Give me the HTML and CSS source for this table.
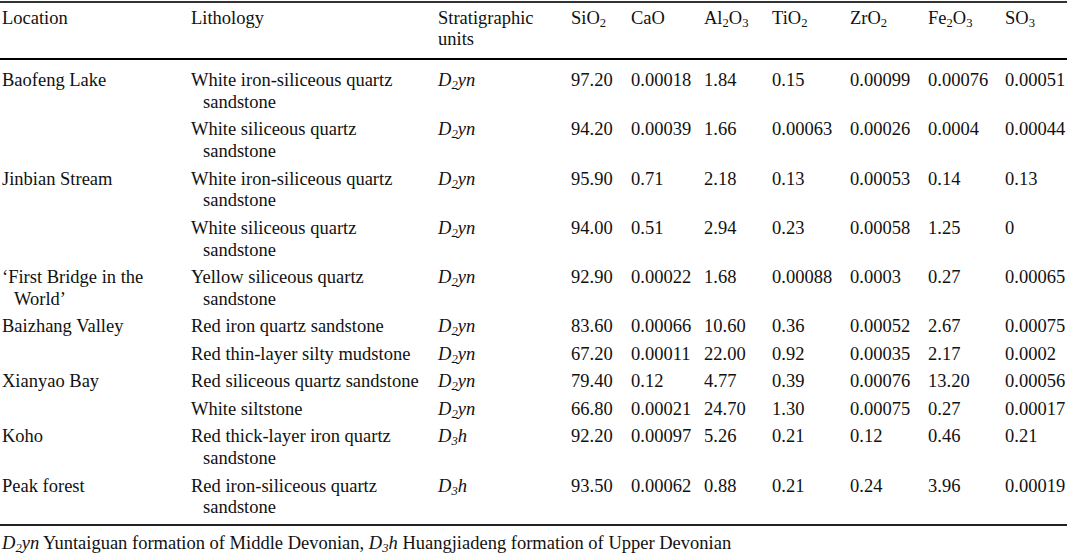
FILE: index.html
```html
<!DOCTYPE html>
<html lang="en">
<head>
<meta charset="utf-8">
<title>Chemical composition of rock samples</title>
<link rel="stylesheet" href="styles.css">
</head>
<body>
<div class="page">
<table class="data">
  <colgroup>
    <col class="c-loc"><col class="c-lith"><col class="c-strat">
    <col class="c-si"><col class="c-ca"><col class="c-al"><col class="c-ti">
    <col class="c-zr"><col class="c-fe"><col class="c-so">
  </colgroup>
  <thead>
    <tr>
      <th>Location</th>
      <th>Lithology</th>
      <th class="strat-h">Stratigraphic units</th>
      <th>SiO<sub>2</sub></th>
      <th>CaO</th>
      <th>Al<sub>2</sub>O<sub>3</sub></th>
      <th>TiO<sub>2</sub></th>
      <th>ZrO<sub>2</sub></th>
      <th>Fe<sub>2</sub>O<sub>3</sub></th>
      <th>SO<sub>3</sub></th>
    </tr>
  </thead>
  <tbody>
    <tr>
      <td class="hang">Baofeng Lake</td>
      <td class="hang lith">White iron-siliceous quartz sandstone</td>
      <td><i>D<sub>2</sub>yn</i></td>
      <td>97.20</td><td>0.00018</td><td>1.84</td><td>0.15</td><td>0.00099</td><td>0.00076</td><td>0.00051</td>
    </tr>
    <tr>
      <td class="hang"></td>
      <td class="hang lith">White siliceous quartz sandstone</td>
      <td><i>D<sub>2</sub>yn</i></td>
      <td>94.20</td><td>0.00039</td><td>1.66</td><td>0.00063</td><td>0.00026</td><td>0.0004</td><td>0.00044</td>
    </tr>
    <tr>
      <td class="hang">Jinbian Stream</td>
      <td class="hang lith">White iron-siliceous quartz sandstone</td>
      <td><i>D<sub>2</sub>yn</i></td>
      <td>95.90</td><td>0.71</td><td>2.18</td><td>0.13</td><td>0.00053</td><td>0.14</td><td>0.13</td>
    </tr>
    <tr>
      <td class="hang"></td>
      <td class="hang lith">White siliceous quartz sandstone</td>
      <td><i>D<sub>2</sub>yn</i></td>
      <td>94.00</td><td>0.51</td><td>2.94</td><td>0.23</td><td>0.00058</td><td>1.25</td><td>0</td>
    </tr>
    <tr>
      <td class="hang">‘First Bridge in the World’</td>
      <td class="hang lith">Yellow siliceous quartz sandstone</td>
      <td><i>D<sub>2</sub>yn</i></td>
      <td>92.90</td><td>0.00022</td><td>1.68</td><td>0.00088</td><td>0.0003</td><td>0.27</td><td>0.00065</td>
    </tr>
    <tr>
      <td class="hang">Baizhang Valley</td>
      <td class="hang lith">Red iron quartz sandstone</td>
      <td><i>D<sub>2</sub>yn</i></td>
      <td>83.60</td><td>0.00066</td><td>10.60</td><td>0.36</td><td>0.00052</td><td>2.67</td><td>0.00075</td>
    </tr>
    <tr>
      <td class="hang"></td>
      <td class="hang lith">Red thin-layer silty mudstone</td>
      <td><i>D<sub>2</sub>yn</i></td>
      <td>67.20</td><td>0.00011</td><td>22.00</td><td>0.92</td><td>0.00035</td><td>2.17</td><td>0.0002</td>
    </tr>
    <tr>
      <td class="hang">Xianyao Bay</td>
      <td class="hang lith">Red siliceous quartz sandstone</td>
      <td><i>D<sub>2</sub>yn</i></td>
      <td>79.40</td><td>0.12</td><td>4.77</td><td>0.39</td><td>0.00076</td><td>13.20</td><td>0.00056</td>
    </tr>
    <tr>
      <td class="hang"></td>
      <td class="hang lith">White siltstone</td>
      <td><i>D<sub>2</sub>yn</i></td>
      <td>66.80</td><td>0.00021</td><td>24.70</td><td>1.30</td><td>0.00075</td><td>0.27</td><td>0.00017</td>
    </tr>
    <tr>
      <td class="hang">Koho</td>
      <td class="hang lith">Red thick-layer iron quartz sandstone</td>
      <td><i>D<sub>3</sub>h</i></td>
      <td>92.20</td><td>0.00097</td><td>5.26</td><td>0.21</td><td>0.12</td><td>0.46</td><td>0.21</td>
    </tr>
    <tr>
      <td class="hang">Peak forest</td>
      <td class="hang lith">Red iron-siliceous quartz sandstone</td>
      <td><i>D<sub>3</sub>h</i></td>
      <td>93.50</td><td>0.00062</td><td>0.88</td><td>0.21</td><td>0.24</td><td>3.96</td><td>0.00019</td>
    </tr>
  </tbody>
</table>
<p class="note"><i>D<sub>2</sub>yn</i> Yuntaiguan formation of Middle Devonian, <i>D<sub>3</sub>h</i> Huangjiadeng formation of Upper Devonian</p>
</div>
</body>
</html>
```
FILE: styles.css
```css
html, body {
  margin: 0;
  padding: 0;
  background: #ffffff;
}

.page {
  padding-top: 1px;
  font-family: "Liberation Serif", "Times New Roman", serif;
  font-size: 18.5px;
  line-height: 21.75px;
  color: #111111;
}

.data {
  width: 1067px;
  table-layout: fixed;
  border-collapse: separate;
  border-spacing: 0;
}

.c-loc { width: 189px; }
.c-lith { width: 247px; }
.c-strat { width: 133px; }
.c-si { width: 60px; }
.c-ca { width: 73px; }
.c-al { width: 68px; }
.c-ti { width: 78px; }
.c-zr { width: 78px; }
.c-fe { width: 77px; }
.c-so { width: 64px; }

.data th,
.data td {
  text-align: left;
  vertical-align: top;
  padding: 3px 0 2.75px 2px;
  font-weight: normal;
  white-space: normal;
}

.data th {
  border-top: 2px solid #333333;
  border-bottom: 2px solid #000000;
  padding-top: 4.5px;
  padding-bottom: 7px;
}

.data th.strat-h {
  padding-right: 8px;
}

.data td.hang {
  padding-left: 14px;
  text-indent: -12px;
}

.data td.lith {
  padding-right: 9px;
}

.data tbody tr:first-child td {
  padding-top: 10px;
}

.data tbody tr:last-child td {
  padding-bottom: 5px;
  border-bottom: 2px solid #222222;
}

sub {
  font-size: 0.68em;
  line-height: 0;
  vertical-align: -0.22em;
}

i sub {
  font-style: italic;
}

.note {
  margin: 7px 0 0 2px;
}
```
